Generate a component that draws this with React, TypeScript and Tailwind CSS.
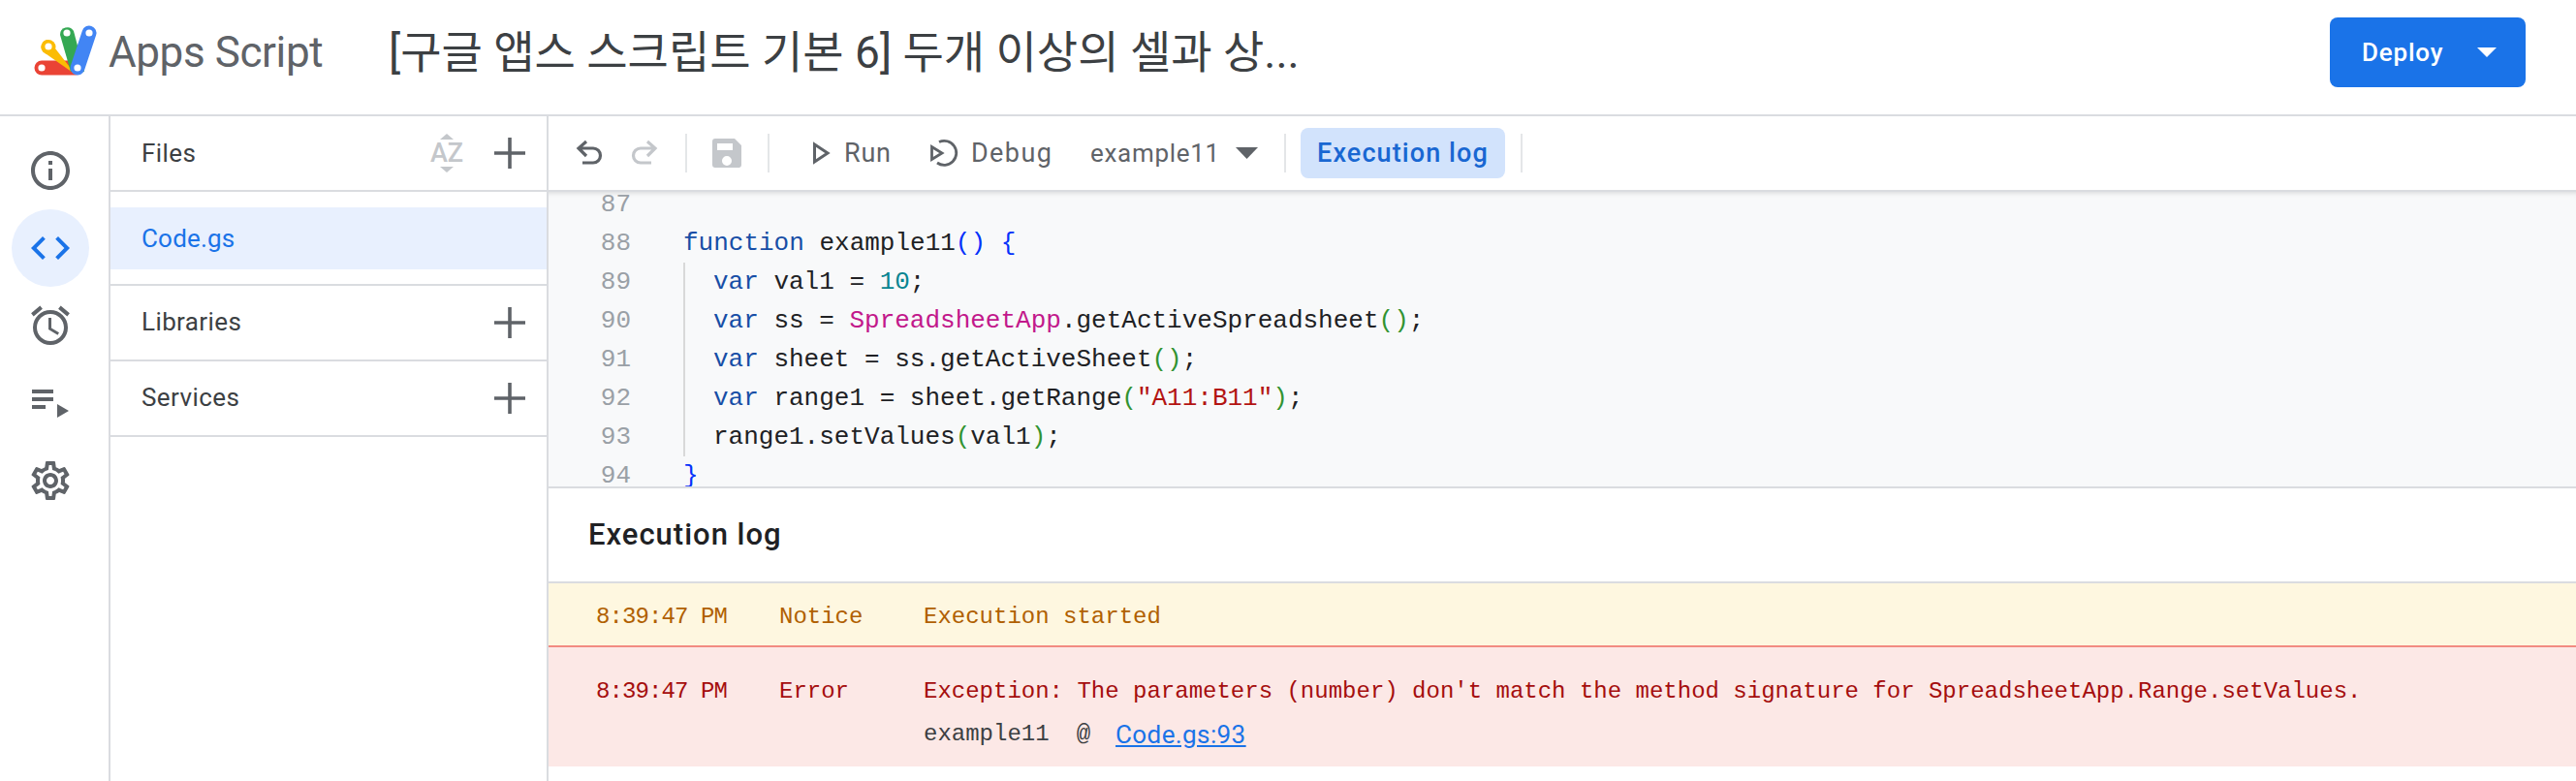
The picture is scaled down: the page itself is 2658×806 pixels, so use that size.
import {
  MdCode,
  MdOutlineAlarm,
  MdOutlineInfo,
  MdOutlineSettings,
} from "react-icons/md";

const border = "border-[#dadce0]";

type Token = [string, string?];

const KW = "text-[#174ea6]";
const BLUE = "text-[#0431fa]";
const GREEN = "text-[#319331]";

const codeLines: { n: number; guide?: boolean; tokens: Token[] }[] = [
  { n: 87, tokens: [] },
  {
    n: 88,
    tokens: [["function", KW], [" example11"], ["()", BLUE], [" "], ["{", BLUE]],
  },
  {
    n: 89,
    guide: true,
    tokens: [["var", KW], [" val1 = "], ["10", "text-[#098591]"], [";"]],
  },
  {
    n: 90,
    guide: true,
    tokens: [
      ["var", KW],
      [" ss = "],
      ["SpreadsheetApp", "text-[#c2188b]"],
      [".getActiveSpreadsheet"],
      ["()", GREEN],
      [";"],
    ],
  },
  {
    n: 91,
    guide: true,
    tokens: [["var", KW], [" sheet = ss.getActiveSheet"], ["()", GREEN], [";"]],
  },
  {
    n: 92,
    guide: true,
    tokens: [
      ["var", KW],
      [" range1 = sheet.getRange"],
      ["(", GREEN],
      ['"A11:B11"', "text-[#b31412]"],
      [")", GREEN],
      [";"],
    ],
  },
  {
    n: 93,
    guide: true,
    tokens: [["range1.setValues"], ["(", GREEN], ["val1"], [")", GREEN], [";"]],
  },
  { n: 94, tokens: [["}", BLUE]] },
];

function Logo() {
  return (
    <svg width="72" height="60" viewBox="0 0 72 60" className="shrink-0">
      <line x1="11" y1="46" x2="46" y2="46" stroke="#ea4335" strokeWidth="15" strokeLinecap="round" />
      <path d="M18 17a7.5 7.5 0 0 0-5.5 12.6L46 53z" fill="#fbbc04" />
      <circle cx="18" cy="24.5" r="7.5" fill="#fbbc04" />
      <path d="M30 12 41 50h14L44 8a7.5 7.5 0 0 0-14 4z" fill="#34a853" />
      <line x1="60" y1="10" x2="48" y2="46" stroke="#4285f4" strokeWidth="15" strokeLinecap="round" />
      <circle cx="11" cy="46" r="3.6" fill="#fff" />
      <circle cx="18" cy="24" r="3.6" fill="#fff" />
      <circle cx="37" cy="10" r="3.6" fill="#fff" />
      <circle cx="60" cy="10" r="3.6" fill="#fff" />
      <circle cx="48" cy="46" r="3.6" fill="#fff" />
    </svg>
  );
}

function Plus() {
  return (
    <svg width="32" height="32" viewBox="0 0 32 32" className="shrink-0">
      <path d="M0 16h32M16 0v32" stroke="#5f6368" strokeWidth="3.6" fill="none" />
    </svg>
  );
}

function AzIcon() {
  return (
    <div className="flex w-[38px] flex-col items-center text-[#c4c7cb]">
      <svg width="14" height="6" viewBox="0 0 14 6">
        <path d="M7 0l7 6H0z" fill="#c4c7cb" />
      </svg>
      <span className="my-[3px] text-[27px] leading-[22px] font-medium">AZ</span>
      <svg width="14" height="6" viewBox="0 0 14 6">
        <path d="M7 6L0 0h14z" fill="#c4c7cb" />
      </svg>
    </div>
  );
}

function QueueIcon() {
  return (
    <svg width="38" height="29" viewBox="0 0 38 29" fill="#5f6368">
      <rect x="0" y="0" width="22" height="4" />
      <rect x="0" y="8" width="22" height="4" />
      <rect x="0" y="16" width="14" height="4" />
      <path d="M26 15l12 7-12 7z" />
    </svg>
  );
}

function Undo({ flip, color }: { flip?: boolean; color: string }) {
  return (
    <svg
      width="32"
      height="32"
      viewBox="0 0 32 32"
      fill="none"
      stroke={color}
      strokeWidth="3.2"
      className={flip ? "-scale-x-100" : ""}
    >
      <path d="M12 4 4 11l8 8M4 11h15a7.5 7.5 0 0 1 0 15H8" />
    </svg>
  );
}

function SaveIcon() {
  return (
    <svg width="30" height="30" viewBox="0 0 30 30" fill="#c4c7cb">
      <path
        fillRule="evenodd"
        d="M3 0h20l7 7v20a3 3 0 0 1-3 3H3a3 3 0 0 1-3-3V3a3 3 0 0 1 3-3zM5 5v7h16V5zm10 13a5 5 0 1 0 0 10 5 5 0 0 0 0-10z"
      />
    </svg>
  );
}

function RunIcon() {
  return (
    <svg width="18" height="24" viewBox="0 0 18 24" fill="none" stroke="#5f6368" strokeWidth="3">
      <path d="M1.5 3v18L15 12z" />
    </svg>
  );
}

function DebugIcon() {
  return (
    <svg width="32" height="30" viewBox="0 0 32 30" fill="none" stroke="#5f6368" strokeWidth="2.8">
      <path d="M1.5 8.5v13L12 15z" />
      <path d="M9 3.5A12.5 12.5 0 1 1 7 25" />
    </svg>
  );
}

function Sep() {
  return <div className="h-[40px] w-[2px] shrink-0 bg-[#e4e6e8]" />;
}

function RailItem({ children, active }: { children: React.ReactNode; active?: boolean }) {
  return (
    <div
      className={`flex h-[80px] w-[80px] items-center justify-center rounded-full ${
        active ? "bg-[#e8f0fe]" : ""
      }`}
    >
      {children}
    </div>
  );
}

function SideRow({ label, extra }: { label: string; extra?: React.ReactNode }) {
  return (
    <div className={`flex h-[78px] items-center justify-between border-b-2 ${border} pr-[22px] pl-[32px]`}>
      <span className={`${extra ? "" : "pb-[2px]"} text-[26px] tracking-[0.4px] text-[#3c4043]`}>{label}</span>
      <div className="flex items-center gap-[30px]">
        {extra}
        <Plus />
      </div>
    </div>
  );
}

export default function App() {
  return (
    <div className="flex h-[806px] w-[2658px] flex-col overflow-hidden bg-white font-['Roboto','Noto_Sans_CJK_KR',sans-serif]">
      {/* Top bar */}
      <header className={`flex h-[120px] shrink-0 items-center border-b-2 ${border} pr-[52px] pb-[10px] pl-[32px]`}>
        <Logo />
        <span className="ml-[8px] w-[289px] text-[44px] tracking-[-0.4px] text-[#5f6368]">Apps Script</span>
        <h1 className="text-[46px] font-normal text-[#3c4043]">[구글 앱스 스크립트 기본 6] 두개 이상의 셀과 상...</h1>
        <button className="ml-auto flex h-[72px] w-[202px] items-center rounded-lg bg-[#1a73e8] pl-[33px] text-white">
          <span className="text-[26px] font-medium tracking-[0.8px]">Deploy</span>
          <svg width="20" height="10" viewBox="0 0 20 10" className="ml-[35px]">
            <path d="M0 0h20L10 10z" fill="#fff" />
          </svg>
        </button>
      </header>

      <div className="flex min-h-0 flex-1">
        {/* Icon rail */}
        <nav className={`flex w-[114px] shrink-0 flex-col items-center border-r-2 ${border} pt-[16px] pr-[8px]`}>
          <RailItem>
            <MdOutlineInfo size={48} color="#5f6368" />
          </RailItem>
          <RailItem active>
            <MdCode size={48} color="#1a73e8" />
          </RailItem>
          <RailItem>
            <MdOutlineAlarm size={48} color="#5f6368" />
          </RailItem>
          <RailItem>
            <QueueIcon />
          </RailItem>
          <RailItem>
            <MdOutlineSettings size={48} color="#5f6368" />
          </RailItem>
        </nav>

        {/* Files panel */}
        <aside className={`w-[452px] shrink-0 border-r-2 ${border}`}>
          <SideRow label="Files" extra={<AzIcon />} />
          <div className={`h-[97px] border-b-2 ${border} pt-[16px]`}>
            <div className="flex h-[64px] items-center bg-[#e8f0fe] pl-[32px] text-[26px] tracking-[0.2px] text-[#1a73e8]">Code.gs</div>
          </div>
          <SideRow label="Libraries" />
          <SideRow label="Services" />
        </aside>

        {/* Editor + log */}
        <main className="flex min-w-0 flex-1 flex-col">
          <div className={`flex h-[78px] shrink-0 items-center border-b-2 ${border} text-[27px] text-[#5f6368]`}>
            <div className="ml-[27px]">
              <Undo color="#5f6368" />
            </div>
            <div className="ml-[23px]">
              <Undo flip color="#c4c7cb" />
            </div>
            <div className="ml-[27px]">
              <Sep />
            </div>
            <div className="ml-[26px]">
              <SaveIcon />
            </div>
            <div className="ml-[27px]">
              <Sep />
            </div>
            <div className="ml-[45px]">
              <RunIcon />
            </div>
            <span className="ml-[14px] w-[89px] tracking-[0.8px]">Run</span>
            <DebugIcon />
            <span className="ml-[10px] w-[123px] tracking-[1.4px]">Debug</span>
            <span className="w-[150px] text-[26px] tracking-[0.7px]">example11</span>
            <svg width="23" height="12" viewBox="0 0 23 12">
              <path d="M0 0h23L11.5 12z" fill="#5f6368" />
            </svg>
            <div className="ml-[27px]">
              <Sep />
            </div>
            <div className="ml-[15px] flex h-[52px] w-[211px] items-center justify-center rounded-lg bg-[#d2e3fc] font-medium tracking-[1.1px] text-[#1967d2]">
              Execution log
            </div>
            <div className="ml-[16px]">
              <Sep />
            </div>
          </div>

          {/* Code */}
          <div className={`h-[306px] shrink-0 overflow-hidden border-b-2 ${border} bg-[#f8f9fa] shadow-[inset_0_6px_6px_-6px_rgba(0,0,0,0.18)]`}>
            <div className="-mt-[7px] font-['Liberation_Mono',monospace] text-[26px] leading-[40px] whitespace-pre text-[#202124]">
              {codeLines.map((line) => (
                <div key={line.n} className="flex h-[40px]">
                  <span className="w-[85px] shrink-0 text-right text-[#9aa0a6]">{line.n}</span>
                  <div
                    className={`ml-[54px] flex-1 ${
                      line.guide ? "border-l-2 border-[#d9d9d9] pl-[29px]" : ""
                    }`}
                  >
                    {line.tokens.map(([text, cls], i) => (
                      <span key={i} className={cls}>
                        {text}
                      </span>
                    ))}
                  </div>
                </div>
              ))}
            </div>
          </div>

          {/* Execution log */}
          <div className={`flex h-[98px] shrink-0 items-center border-b-2 ${border} pl-[41px]`}>
            <h2 className="text-[31px] font-medium tracking-[1px] text-[#202124]">Execution log</h2>
          </div>
          <div className="font-['Liberation_Mono',monospace] text-[24px] whitespace-pre">
            <div className="flex h-[64px] items-center bg-[#fef7e0] pt-[5px] pl-[49px] text-[#b06000]">
              <span className="w-[189px] tracking-[-0.9px]">8:39:47 PM</span>
              <span className="w-[149px]">Notice</span>
              <span>Execution started</span>
            </div>
            <div className="h-[125px] border-t-2 border-[#f28b82] bg-[#fce8e6] pt-[24px] pl-[49px] text-[#a50e0e]">
              <div className="flex h-[44px] items-center">
                <span className="w-[189px] tracking-[-0.9px]">8:39:47 PM</span>
                <span className="w-[149px]">Error</span>
                <span>Exception: The parameters (number) don't match the method signature for SpreadsheetApp.Range.setValues.</span>
              </div>
              <div className="flex h-[44px] items-center pl-[338px] text-[#3c4043]">
                <span>example11</span>
                <span className="ml-[28px]">@</span>
                <a className="ml-[26px] font-['Roboto',sans-serif] text-[26px] tracking-[0.4px] text-[#1a73e8] underline">Code.gs:93</a>
              </div>
            </div>
          </div>
        </main>
      </div>
    </div>
  );
}
